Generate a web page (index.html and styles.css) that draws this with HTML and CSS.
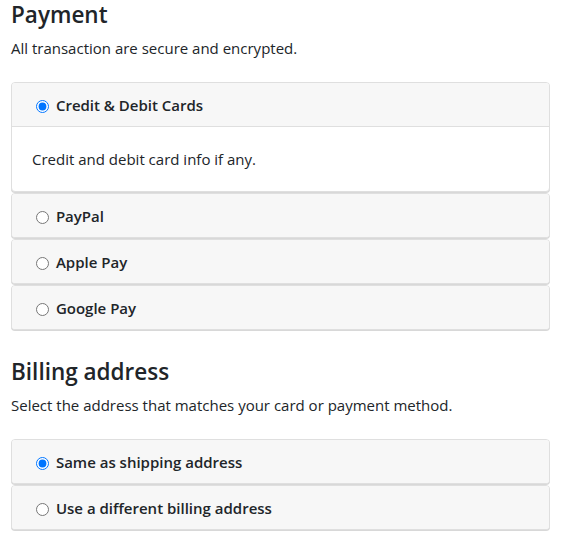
FILE: index.html
```html
<!DOCTYPE html>
<html lang="en">
<head>
<meta charset="utf-8">
<title>Payment</title>
<link rel="stylesheet" href="styles.css">
</head>
<body>
<section class="section">
  <h4 class="section-title">Payment</h4>
  <p class="section-sub">All transaction are secure and encrypted.</p>
  <div class="accordion">
    <div class="card">
      <label class="card-header has-body"><input type="radio" name="pay" checked> Credit &amp; Debit Cards</label>
      <div class="card-body">Credit and debit card info if any.</div>
    </div>
    <div class="card">
      <label class="card-header"><input type="radio" name="pay"> PayPal</label>
    </div>
    <div class="card">
      <label class="card-header"><input type="radio" name="pay"> Apple Pay</label>
    </div>
    <div class="card">
      <label class="card-header"><input type="radio" name="pay"> Google Pay</label>
    </div>
  </div>
</section>
<section class="section billing">
  <h4 class="section-title">Billing address</h4>
  <p class="section-sub">Select the address that matches your card or payment method.</p>
  <div class="accordion">
    <div class="card">
      <label class="card-header"><input type="radio" name="bill" checked> Same as shipping address</label>
    </div>
    <div class="card">
      <label class="card-header"><input type="radio" name="bill"> Use a different billing address</label>
    </div>
  </div>
</section>
</body>
</html>
```
FILE: styles.css
```css
html, body {
  margin: 0;
  padding: 0;
  background: #fff;
}
body {
  padding: 0 11px;
  font-family: "Open Sans", "Noto Sans", sans-serif;
  font-size: 15px;
  line-height: 22px;
  color: #212529;
}
.section-title {
  margin: 0;
  font-size: 22.5px;
  line-height: 29px;
  font-weight: 600;
}
.section-sub {
  margin: 8px 0 0;
  font-size: 15px;
  line-height: 22px;
}
.accordion {
  margin-top: 23px;
}
.card {
  border: 1px solid #dfdfdf;
  border-radius: 4px;
  background: #fff;
  margin-bottom: 1px;
  box-shadow: 0 1px 0 #d8d8d8;
  overflow: hidden;
}
.card-header {
  display: block;
  background: #f7f7f7;
  padding: 10.5px 19px;
  font-weight: 600;
}
.card-header.has-body {
  border-bottom: 1px solid #dfdfdf;
}
.card-header input {
  margin: 0 3px 0 5px;
  vertical-align: -2px;
}
.card-body {
  padding: 21px 20px;
}
.billing {
  margin-top: 27px;
}
```
